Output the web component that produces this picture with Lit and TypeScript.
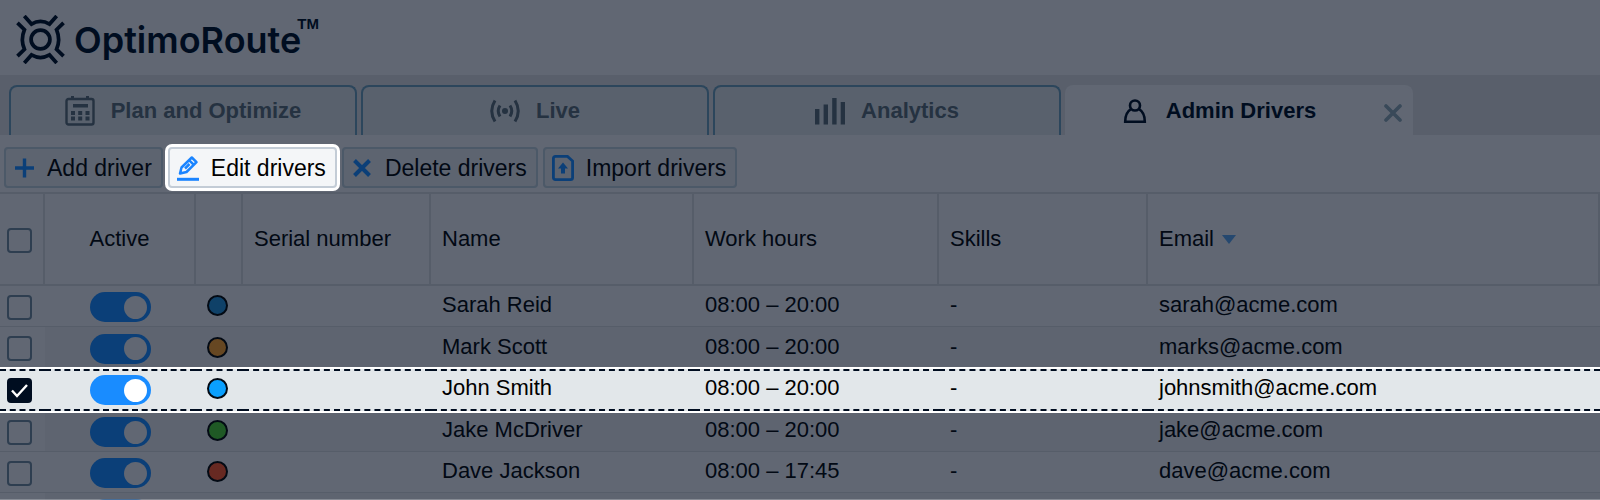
import { LitElement, html, css, svg, nothing } from "lit";
import { customElement, state } from "lit/decorators.js";
import { classMap } from "lit/directives/class-map.js";

interface Driver {
  name: string;
  hours: string;
  email: string;
  color: string;
}

const DRIVERS: Driver[] = [
  { name: "Sarah Reid", hours: "08:00 – 20:00", email: "sarah@acme.com", color: "c-blue" },
  { name: "Mark Scott", hours: "08:00 – 20:00", email: "marks@acme.com", color: "c-orange" },
  { name: "John Smith", hours: "08:00 – 20:00", email: "johnsmith@acme.com", color: "c-sky" },
  { name: "Jake McDriver", hours: "08:00 – 20:00", email: "jake@acme.com", color: "c-green" },
  { name: "Dave Jackson", hours: "08:00 – 17:45", email: "dave@acme.com", color: "c-red" },
];

const icons = {
  logo: svg`<svg class="logo-mark" viewBox="0 0 50 50" fill="none" stroke="currentColor" stroke-width="3.8" aria-hidden="true">
    <circle cx="25" cy="25" r="9.6"/>
    <path d="M8.500 1 L15.800 9.200 Q25 4 34.200 9.200 L41.500 1"/>
    <path d="M8.500 49 L15.800 40.800 Q25 46 34.200 40.800 L41.500 49"/>
    <path d="M1.500 8 L8.600 15 Q4.400 25 8.600 35 L1.500 42"/>
    <path d="M48.500 8 L41.400 15 Q45.600 25 41.400 35 L48.500 42"/></svg>`,
  calendar: svg`<svg class="tab-icon" viewBox="0 0 30 30" aria-hidden="true">
    <rect x="1.5" y="3" width="27" height="25.5" rx="2" fill="none" stroke="currentColor" stroke-width="2.4"/>
    <path d="M6 0h3v3H6zM21 0h3v3h-3zM8 8h15v3.4H8zM6 15h4v4H6zM13.200 15h4v4h-4zM20.500 15h4v4h-4zM6 20.500h4v4H6zM13.200 20.500h4v4h-4zM20.500 20.500h4v4h-4z" fill="currentColor"/></svg>`,
  live: svg`<svg class="tab-icon" viewBox="0 0 30 30" fill="none" stroke="currentColor" stroke-width="3" aria-hidden="true">
    <circle cx="15" cy="15" r="3" fill="currentColor" stroke="none"/>
    <path d="M10 9.500Q6.500 15 10 20.500M20 9.500Q23.500 15 20 20.500M5 4.500Q-1.500 15 5 25.500M25 4.500Q31.500 15 25 25.500"/></svg>`,
  bars: svg`<svg class="tab-icon" viewBox="0 0 30 30" fill="currentColor" aria-hidden="true">
    <path d="M0 13h4.400v15.500H0zM8.600 8.500H13v20H8.600zM17.200 2h4.400v26.500h-4.400zM25.700 6h4.400v22.500h-4.400z"/></svg>`,
  person: svg`<svg class="tab-icon" viewBox="0 0 30 30" fill="none" stroke="currentColor" stroke-width="2.600" aria-hidden="true">
    <circle cx="15" cy="9.500" r="5"/>
    <path d="M11 13.200C7 15.500 5.200 19 5.200 25.800H24.800C24.800 19 23 15.500 19 13.200"/></svg>`,
  close: svg`<svg class="close-icon" viewBox="0 0 18 18" stroke="currentColor" stroke-width="3.600" stroke-linecap="round" aria-hidden="true">
    <path d="M2 2l14 14M16 2l-14 14"/></svg>`,
  plus: svg`<svg class="tool-icon" viewBox="0 0 22 26" stroke="currentColor" stroke-width="3.400" aria-hidden="true">
    <path d="M2 13h19M11.500 3.500v19"/></svg>`,
  pencil: svg`<svg class="tool-icon" viewBox="0 0 22 26" fill="none" stroke="currentColor" stroke-width="2.500" stroke-linejoin="round" aria-hidden="true">
    <path d="M3 18.500L4.500 12.500L14.800 2.500L19.500 7.200L9.500 17Z"/><path d="M12 5.200L17 10M8 13.500L12.500 9"/><path d="M0 24.300h22" stroke-width="3"/></svg>`,
  cross: svg`<svg class="tool-icon" viewBox="0 0 22 26" stroke="currentColor" stroke-width="4" aria-hidden="true">
    <path d="M3.500 5.500l15 15M18.500 5.500l-15 15"/></svg>`,
  upload: svg`<svg class="tool-icon" viewBox="0 0 22 26" fill="none" stroke="currentColor" stroke-width="2.800" aria-hidden="true">
    <path d="M3.500 1.400H15.500L20.600 6V22.500Q20.600 24.600 18.500 24.600H3.500Q1.400 24.600 1.400 22.500V3.500Q1.400 1.400 3.500 1.400Z"/>
    <path d="M11 7.500L16 13.500H13V18.500H9V13.500H6Z" fill="currentColor" stroke="none"/></svg>`,
};

const TABS = [
  { label: "Plan and Optimize", icon: icons.calendar },
  { label: "Live", icon: icons.live },
  { label: "Analytics", icon: icons.bars },
];

const TOOLS = [
  { label: "Add driver", icon: icons.plus },
  { label: "Edit drivers", icon: icons.pencil },
  { label: "Delete drivers", icon: icons.cross },
  { label: "Import drivers", icon: icons.upload },
];

@customElement("app-root")
export class AppRoot extends LitElement {
  @state() private selected = 2;

  static styles = css`
    :host {
      --surface: #616773;
      --surface-alt: #5e6470;
      --bar: #595f6b;
      --line: #565d69;
      --ink: #000d20;
      --text: #020914;
      --muted: #253241;
      --blue: #0b3f78;
      display: flex;
      flex-direction: column;
      position: relative;
      height: 100vh;
      overflow: hidden;
      background: var(--surface);
      color: var(--text);
      font: 22px/26px "Liberation Sans", Arial, sans-serif;
    }
    :host::after {
      content: "";
      position: absolute;
      inset: auto 0 0 0;
      height: 1px;
      background: rgba(255, 255, 255, 0.25);
    }
    *, *::before, *::after { box-sizing: border-box; }
    button { font: inherit; color: inherit; cursor: pointer; margin: 0; }
    svg { display: block; flex: none; }

    .header {
      display: flex;
      flex: none;
      align-items: center;
      height: 75px;
      padding: 4px 16px 0;
      color: var(--ink);
    }
    .logo-mark { width: 49px; height: 49px; }
    .brand {
      margin-left: 9px;
      font: 600 36px/40px Inter, "Liberation Sans", sans-serif;
    }
    .tm { align-self: flex-start; margin-top: 10px; margin-left: -4px; font: bold 15px/20px "Liberation Sans", sans-serif; }

    .tabs {
      display: flex;
      flex: none;
      gap: 4px;
      height: 60px;
      padding: 10px 9px 0;
      background: var(--bar);
    }
    .tab {
      display: flex;
      width: 348px;
      border: 2px solid #2c465c;
      border-bottom: 0;
      border-radius: 8px 8px 0 0;
      background: #59616d;
      color: var(--muted);
    }
    .tab.current { border-color: var(--surface); background: var(--surface); color: var(--ink); }
    .tab-main {
      display: flex;
      flex: 1;
      align-items: center;
      justify-content: center;
      gap: 16px;
      padding: 0;
      border: 0;
      background: none;
      font-weight: bold;
      white-space: nowrap;
    }
    .tab-icon { width: 30px; height: 30px; }
    .tab-close {
      display: flex;
      align-items: center;
      justify-content: flex-end;
      width: 42px;
      padding: 4px 9px 0 0;
      border: 0;
      background: none;
      color: #394959;
    }
    .close-icon { width: 18px; height: 18px; }

    .toolbar {
      display: flex;
      flex: none;
      gap: 5px;
      padding: 12px 4px 4px;
      border-bottom: 2px solid var(--line);
      font-size: 23px;
    }
    .tool {
      display: flex;
      align-items: center;
      gap: 12px;
      height: 41px;
      padding: 0 9px 0 7px;
      border: 2px solid #4c5968;
      border-radius: 4px;
      background: #5d6470;
      white-space: nowrap;
    }
    .tool-icon { width: 22px; height: 26px; color: var(--blue); }
    .tool.spotlit {
      border-color: #c3ccd6;
      background: #f4f6f8;
      color: #000;
      box-shadow: 0 0 0 3px #fff;
    }
    .tool.spotlit .tool-icon { color: #1a84ff; }

    .grid { flex: 1; min-height: 0; overflow: hidden; }
    .table {
      width: 100%;
      border-collapse: separate;
      border-spacing: 0;
      table-layout: fixed;
    }
    .w-check { width: 45px; }
    .w-active { width: 151px; }
    .w-color { width: 47px; }
    .w-serial { width: 188px; }
    .w-name { width: 263px; }
    .w-hours { width: 245px; }
    .w-skills { width: 209px; }
    th {
      height: 92px;
      padding: 0 11px;
      border-right: 2px solid var(--line);
      border-bottom: 2px solid var(--line);
      font-weight: normal;
      text-align: left;
    }
    td {
      height: 41px;
      padding: 0 11px 2px;
      border-bottom: 1px solid var(--line);
      white-space: nowrap;
    }
    tbody tr:has(+ .chosen) td { height: 42px; }
    tbody tr:nth-child(even) td:not(.check-cell) { background: var(--surface-alt); }
    .check-cell { padding: 2px 0 0 7px; }
    th.toggle-cell { padding: 0; text-align: center; }
    td.toggle-cell { padding: 2px 0 0; }
    td.dot-cell { padding: 0 0 1px 11px; }

    tbody tr.chosen { position: relative; box-shadow: 0 0 0 2px #fff; }
    tbody tr.chosen td {
      height: 42px;
      padding-bottom: 4px;
      border-top: 2px dashed #000d20;
      border-bottom: 2px dashed #000d20;
      background: #e2e7ea;
      color: #000;
    }
    tbody tr.chosen .check-cell, tbody tr.chosen .toggle-cell { padding-top: 0; padding-bottom: 0; }

    .check {
      appearance: none;
      display: block;
      width: 25px;
      height: 25px;
      margin: 0;
      border: 2px solid #2e3e50;
      border-radius: 4px;
    }
    .check:checked {
      border-color: #000d20;
      background: #000d20 url("data:image/svg+xml,%3Csvg xmlns='http://www.w3.org/2000/svg' viewBox='0 0 21 21' fill='none' stroke='white' stroke-width='2.4'%3E%3Cpath d='M3 10.500l5 5.500L18 5'/%3E%3C/svg%3E") center / 21px 21px no-repeat;
    }
    .switch {
      appearance: none;
      display: flex;
      align-items: center;
      justify-content: flex-end;
      width: 61px;
      height: 30px;
      margin: 0 auto;
      padding: 4px;
      border-radius: 15px;
      background: var(--blue);
    }
    .switch::before {
      content: "";
      width: 23px;
      height: 23px;
      border-radius: 50%;
      background: var(--surface);
    }
    .chosen .switch { background: #198cff; }
    .chosen .switch::before { background: #fff; }

    .dot {
      display: block;
      width: 21px;
      height: 21px;
      border: 2px solid #030a14;
      border-radius: 50%;
    }
    .c-blue { background: #0f4168; }
    .c-orange { background: #664722; }
    .c-sky { background: #0aa0ff; }
    .c-green { background: #1f5925; }
    .c-red { background: #672922; }

    .sort {
      display: inline-flex;
      align-items: center;
      gap: 8px;
      padding: 0;
      border: 0;
      background: none;
    }
    .sort-arrow { width: 14px; height: 9px; color: #25486f; }
  `;

  private renderRow(driver: Driver, index: number) {
    const chosen = index === this.selected;
    return html`<tr class=${classMap({ chosen })}>
      <td class="check-cell">
        <input class="check" type="checkbox" aria-label="Select ${driver.name}" .checked=${chosen}
          @change=${() => (this.selected = index)} />
      </td>
      <td class="toggle-cell">
        <input class="switch" type="checkbox" role="switch" aria-label="${driver.name} active" checked />
      </td>
      <td class="dot-cell"><span class="dot ${driver.color}"></span></td>
      <td></td>
      <td>${driver.name}</td>
      <td>${driver.hours}</td>
      <td>-</td>
      <td>${driver.email}</td>
    </tr>`;
  }

  render() {
    return html`
      <header class="header">
        ${icons.logo}<span class="brand">OptimoRoute</span><span class="tm">TM</span>
      </header>
      <nav class="tabs" aria-label="Sections">
        ${TABS.map((t) => html`<div class="tab"><button class="tab-main">${t.icon}<span>${t.label}</span></button></div>`)}
        <div class="tab current">
          <button class="tab-main" aria-current="page">${icons.person}<span>Admin Drivers</span></button>
          <button class="tab-close" aria-label="Close tab">${icons.close}</button>
        </div>
      </nav>
      <div class="toolbar" role="toolbar">
        ${TOOLS.map((t, i) => html`<button class=${classMap({ tool: true, spotlit: i === 1 })}>${t.icon}<span>${t.label}</span></button>`)}
      </div>
      <main class="grid">
        <table class="table">
          <colgroup>
            <col class="w-check" /><col class="w-active" /><col class="w-color" /><col class="w-serial" />
            <col class="w-name" /><col class="w-hours" /><col class="w-skills" /><col />
          </colgroup>
          <thead>
            <tr>
              <th class="check-cell"><input class="check" type="checkbox" aria-label="Select all drivers" /></th>
              <th class="toggle-cell">Active</th>
              <th></th>
              <th>Serial number</th>
              <th>Name</th>
              <th>Work hours</th>
              <th>Skills</th>
              <th>
                <button class="sort">Email
                  <svg class="sort-arrow" viewBox="0 0 14 9" aria-hidden="true"><path d="M0 0h14L7 9z" fill="currentColor"/></svg>
                </button>
              </th>
            </tr>
          </thead>
          <tbody>
            ${DRIVERS.map((d, i) => this.renderRow(d, i))}
            <tr>
              <td class="check-cell"></td>
              <td class="toggle-cell"><input class="switch" type="checkbox" role="switch" aria-label="Driver active" checked /></td>
              <td colspan="6">${nothing}</td>
            </tr>
          </tbody>
        </table>
      </main>
    `;
  }
}
